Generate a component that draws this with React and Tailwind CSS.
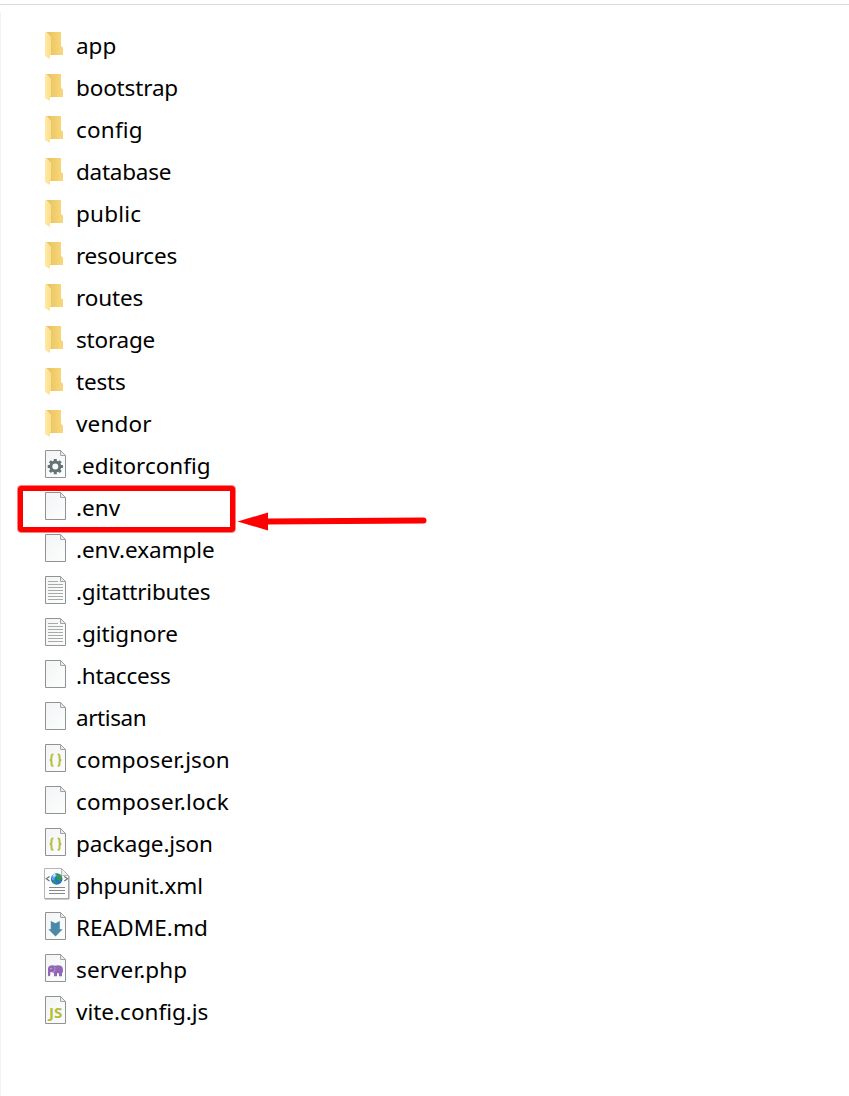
import React from "react";

const files = [
  ["app", "folder", "tracking-[0px]"],
  ["bootstrap", "folder", "tracking-[-0.15px]"],
  ["config", "folder", "tracking-[0.2px]"],
  ["database", "folder", "tracking-[-0.25px]"],
  ["public", "folder", "tracking-[0.2px]"],
  ["resources", "folder", "tracking-[-0.22px]"],
  ["routes", "folder", "tracking-[-0.15px]"],
  ["storage", "folder", "tracking-[-0.2px]"],
  ["tests", "folder", "tracking-[-0.2px]"],
  ["vendor", "folder", "tracking-[0.15px]"],
  [".editorconfig", "gear", "tracking-[0px]"],
  [".env", "blank", "tracking-[0px]"],
  [".env.example", "blank", "tracking-[-0.05px]"],
  [".gitattributes", "text", "tracking-[-0.2px]"],
  [".gitignore", "text", "tracking-[-0.05px]"],
  [".htaccess", "blank", "tracking-[-0.22px]"],
  ["artisan", "blank", "tracking-[-0.4px]"],
  ["composer.json", "json", "tracking-[0.12px]"],
  ["composer.lock", "blank", "tracking-[0.2px]"],
  ["package.json", "json", "tracking-[-0.15px]"],
  ["phpunit.xml", "xml", "tracking-[-0.1px]"],
  ["README.md", "markdown", "tracking-[0.1px]"],
  ["server.php", "php", "tracking-[0.1px]"],
  ["vite.config.js", "js", "tracking-[0px]"],
];

function Folder() {
  return (
    <g>
      <path d="M6 7h15v14l2 2v7H9V10z" fill="url(#folderBack)" />
      <path d="M21 21l2 2v7h-2z" fill="#f5d67e" />
      <path d="M5 7l6 4.5V29l-1 .5V34l-5-3z" fill="url(#folderFront)" />
    </g>
  );
}

function Sheet() {
  return (
    <g>
      <path d="M5.5 5.5h15l5 5v22h-20z" fill="url(#sheet)" stroke="#929292" />
      <path d="M20.5 5.5v5h5z" fill="#e9eaea" stroke="#9c9c9c" strokeWidth="0.9" />
    </g>
  );
}

function Glyph({ kind }) {
  switch (kind) {
    case "gear":
      return (
        <g stroke="#647276" fill="none">
          <circle cx="15.3" cy="21.6" r="4.5" strokeWidth="3" />
          <path
            d="M15.3 14v2.5M15.3 26.7v2.5M7.7 21.6h2.5M20.4 21.6h2.5M9.9 16.2l1.8 1.8M18.9 25.2l1.8 1.8M9.9 27l1.8-1.8M18.9 18l1.8-1.8"
            strokeWidth="3"
          />
        </g>
      );
    case "text":
      return (
        <path
          d="M8 10.5h10M8 13.5h15M8 16.5h15M8 19.5h15M8 22.5h15M8 25.5h15M8 28.5h15"
          stroke="#a9a9a9"
        />
      );
    case "json":
      return (
        <g stroke="#b9bd42" strokeWidth="2" fill="none">
          <path d="M13.4 15.4h-.8q-1.1 0-1.1 1.5v2.4q0 1.8-1.8 1.8 1.8 0 1.8 1.8v2.4q0 1.5 1.1 1.5h.8" />
          <path d="M17.6 15.4h.8q1.1 0 1.1 1.5v2.4q0 1.8 1.8 1.8-1.8 0-1.8 1.8v2.4q0 1.5-1.1 1.5h-.8" />
        </g>
      );
    case "markdown":
      return (
        <path d="M10.8 14l4.7 2.2 4.3-2.2v8.2h2.9l-7.2 7.3-7.2-7.3h2.5z" fill="#4a8aa8" />
      );
    case "php":
      return (
        <g>
          <path
            d="M8 19q1-3 4.5-2.8 1.7 0 2.5.6 2-1.1 5-.4 2.8.8 2.9 3.8v4l-.9-1.4v4.4h-3v-3h-2v3h-3v-3.5q-1.5.1-2.8-.6-.8-.3-.9.2v2.4q0 1.500-1.400 1.500-.9 0-.9-1.200z"
            fill="#9167b5"
          />
          <path d="M14.8 18v4.2l-2 .4" stroke="#b99cd0" strokeWidth="0.7" fill="none" />
          <circle cx="11" cy="19.5" r="0.6" fill="#eee5f5" />
        </g>
      );
    case "js":
      return (
        <text
          x="9"
          y="26.5"
          textLength="13.5"
          lengthAdjust="spacingAndGlyphs"
          className="fill-[#b7bc39] font-['Open_Sans',sans-serif] text-[14.5px] font-bold"
        >
          JS
        </text>
      );
    default:
      return null;
  }
}

function XmlFile() {
  return (
    <g>
      <path d="M4.5 3.5h17l7 7v23h-24z" fill="#fcfcfc" stroke="#b5b5b5" />
      <path d="M5 34h24V11" fill="none" stroke="#999" />
      <path d="M21.5 3.5v7h7z" fill="#eee" stroke="#aaa" strokeWidth="0.8" />
      <path d="M9.5 11.5l-3.200 2.300 3.200 2.200M24.300 11.500l3.200 2.300-3.200 2.200" fill="none" stroke="#657580" strokeWidth="1.2" />
      <circle cx="16.7" cy="14" r="5.8" fill="#2374cb" />
      <path d="M11.5 12q2-3 4.5-3l1 2-2 1.7-1 3-2-1z" fill="#59a8ec" />
      <path d="M17 8.8l4 1.200 1 3-2.500 3-3-2zM13 15l3 1 .5 3-3-1.500z" fill="#329b3e" />
      <path d="M12.5 10.5l2-1.600 1.500 1-2 2z" fill="#d8f0fa" />
      <path d="M9 22.5h16M9 25.5h16M9 28.5h16" stroke="#85898c" />
    </g>
  );
}

function FileIcon({ kind }) {
  return (
    <svg className="h-[42px] w-9 shrink-0" viewBox="0 0 36 42" aria-hidden="true">
      {kind === "folder" ? (
        <Folder />
      ) : kind === "xml" ? (
        <XmlFile />
      ) : (
        <>
          <Sheet />
          <Glyph kind={kind} />
        </>
      )}
    </svg>
  );
}

function Gradients() {
  return (
    <svg className="absolute h-0 w-0" aria-hidden="true">
      <defs>
        <linearGradient id="folderBack">
          <stop offset="0.2" stopColor="#eac562" />
          <stop offset="1" stopColor="#fada7c" />
        </linearGradient>
        <linearGradient id="folderFront">
          <stop stopColor="#ffe9a4" />
          <stop offset="1" stopColor="#fbdf8d" />
        </linearGradient>
        <linearGradient id="sheet" x2="1" y2="1">
          <stop stopColor="#f3f4f5" />
          <stop offset="1" stopColor="#fcfdfd" />
        </linearGradient>
      </defs>
    </svg>
  );
}

export default function App() {
  return (
    <main className="relative flex h-[1096px] w-[849px] flex-col overflow-hidden bg-white font-['Noto_Sans','Open_Sans',sans-serif] text-black">
      <Gradients />
      <div className="mt-1 h-px shrink-0 bg-[#d9d9d9]" />
      <div className="mt-[7px] flex-1 border-l border-[#f3f3f3] pt-[13px] pl-[39px]">
        <ul>
          {files.map(([name, kind, tracking]) => (
            <li key={name} className="flex h-[42px] items-center">
              <FileIcon kind={kind} />
              <span className={`text-[22.5px] leading-[42px] whitespace-nowrap ${tracking}`}>{name}</span>
            </li>
          ))}
        </ul>
      </div>
      <div className="absolute top-[486px] left-[18px] h-[46px] w-[217px] rounded-[3px] border-[5px] border-[#ff0000] outline-[0.5px] outline-[#ff0000]/50" />
      <svg className="absolute top-[505px] left-[236px] h-8 w-[194px]" viewBox="0 0 194 32" aria-hidden="true">
        <path d="M30 16.5L187.5 15.5" stroke="#ff0000" strokeWidth="6" strokeLinecap="round" />
        <path d="M1.5 16.5L32 7.5v18z" fill="#ff0000" />
      </svg>
    </main>
  );
}
